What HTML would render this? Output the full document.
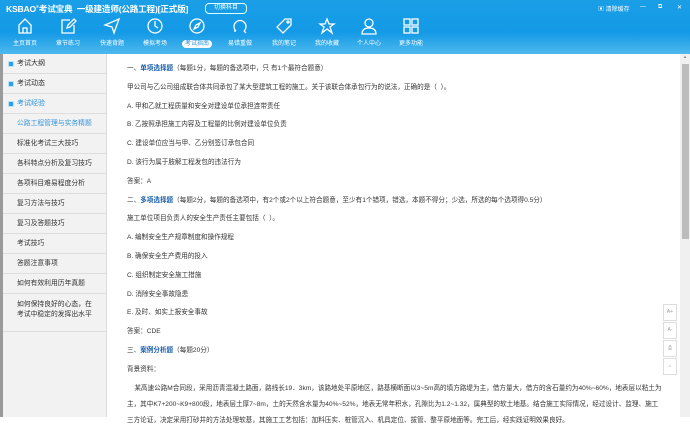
<html><head><style>
*{margin:0;padding:0;box-sizing:border-box}
body{width:690px;height:417px;overflow:hidden;font-family:"Liberation Sans","Noto Sans CJK SC",sans-serif;background:#fff;position:relative}
.hd{position:absolute;left:0;top:0;width:690px;height:54px;background:linear-gradient(#1a9ee6,#139ae6 60%,#4fb8ee);}
.hd .ttl{position:absolute;left:6px;top:3px;color:#fff;font-weight:bold;font-size:8.6px;white-space:nowrap;letter-spacing:-0.2px}
.sw{position:absolute;left:205px;top:3px;width:42px;height:11px;border:1px solid #dff;border-radius:4px;color:#fff;font-size:6px;text-align:center;line-height:9px}
.nav{position:absolute;top:17px;width:40px;text-align:center;color:#fff;font-size:6px}
.nav svg{display:block;margin:0 auto;width:18px;height:18px}
.nav span{display:inline-block;margin-top:5px;padding:0 3px;line-height:8px;border-radius:4px}
.act span{background:#fff;color:#1b8fd8}
.tr{position:absolute;top:4px;color:#fff;font-size:6px}
.sb{position:absolute;left:0;top:54px;width:107px;height:363px;background:#f2f2f2;border-left:3px solid #9a9a9a;border-right:1px solid #ddd}
.it{height:20px;border-bottom:1px solid #ddd;font-size:7px;line-height:20px;color:#333;padding-left:14px;position:relative}
.it i{position:absolute;left:5px;top:7px;width:6px;height:6px;background:#2aa0e8;border:1px solid #bfe3f8}
.sub{padding-left:14px;font-size:6.8px}
.ct{position:absolute;left:127px;top:63px;width:550px;font-size:6.6px;color:#333}
.ct p{height:18.8px;line-height:12px;white-space:nowrap}
.b{color:#1a5fa8;font-weight:bold}
.scr{position:absolute;left:680px;top:54px;width:10px;height:363px;background:#f0f0f0}
.th{position:absolute;left:682px;top:64px;width:7px;height:175px;background:#bcbcbc}
.tb{position:absolute;left:663px;width:14px;height:17px;border:1px solid #ddd;background:#fff;color:#999;font-size:5px;text-align:center;line-height:15px}
</style></head><body>
<div class="hd">
<div class="ttl">KSBAO<sup style="font-size:4px">®</sup>考试宝典 &nbsp;一级建造师(公路工程)[正式版]</div>
<div class="sw">切换科目</div>
<div class="tr" style="left:598px">▣ 清除缓存</div>
<div class="tr" style="left:640px">—</div>
<div class="tr" style="left:658px">⧉</div>
<div class="tr" style="left:677px">✕</div>
<div class="nav" style="left:5px"><svg viewBox="0 0 18 18" fill="none" stroke="#fff" stroke-width="1.3"><path d="M3 8L9 2l6 6v8H3z M7 16v-5h4v5"/></svg><span>主页首页</span></div>
<div class="nav" style="left:48px"><svg viewBox="0 0 18 18" fill="none" stroke="#fff" stroke-width="1.3"><path d="M11 3H3v13h12V8 M8 11l1-3 6-6 2 2-6 6z"/></svg><span>章节练习</span></div>
<div class="nav" style="left:92px"><svg viewBox="0 0 18 18" fill="none" stroke="#fff" stroke-width="1.3"><path d="M2 8l14-6-5 14-2-6z"/></svg><span>快速背题</span></div>
<div class="nav" style="left:135px"><svg viewBox="0 0 18 18" fill="none" stroke="#fff" stroke-width="1.3"><circle cx="9" cy="9" r="7"/><path d="M9 4v5l3 2"/></svg><span>模拟考场</span></div>
<div class="nav act" style="left:177px"><svg viewBox="0 0 18 18" fill="none" stroke="#fff" stroke-width="1.3"><circle cx="9" cy="9" r="7"/><path d="M12 6l-2 4-4 2 2-4z"/></svg><span>考试指南</span></div>
<div class="nav" style="left:220px"><svg viewBox="0 0 18 18" fill="none" stroke="#fff" stroke-width="1.3"><path d="M5 14A6 6 0 1 1 13 14 M5 14l-2 0 M13 14l2 2"/></svg><span>易错重做</span></div>
<div class="nav" style="left:264px"><svg viewBox="0 0 18 18" fill="none" stroke="#fff" stroke-width="1.3"><path d="M10 2h6v6l-8 8-6-6z"/><circle cx="13" cy="5" r="1"/></svg><span>我的笔记</span></div>
<div class="nav" style="left:307px"><svg viewBox="0 0 18 18" fill="none" stroke="#fff" stroke-width="1.3"><path d="M9 2l2 5h5l-4 3 2 6-5-4-5 4 2-6-4-3h5z"/></svg><span>我的收藏</span></div>
<div class="nav" style="left:349px"><svg viewBox="0 0 18 18" fill="none" stroke="#fff" stroke-width="1.3"><circle cx="9" cy="6" r="4"/><path d="M2 17c0-5 4-6 7-6s7 1 7 6z"/></svg><span>个人中心</span></div>
<div class="nav" style="left:391px"><svg viewBox="0 0 18 18" fill="none" stroke="#fff" stroke-width="1.3"><rect x="2" y="2" width="6" height="6"/><rect x="10" y="2" width="6" height="6"/><rect x="2" y="10" width="6" height="6"/><rect x="10" y="10" width="6" height="6"/></svg><span>更多功能</span></div>
</div>
<div class="sb">
<div class="it"><i></i>考试大纲</div>
<div class="it"><i></i>考试动态</div>
<div class="it" style="color:#2a8fd8"><i></i>考试经验</div>
<div class="it sub" style="color:#3a95dc">公路工程管理与实务精题</div>
<div class="it sub">标准化考试三大技巧</div>
<div class="it sub">各科特点分析及复习技巧</div>
<div class="it sub">各项科目难易程度分析</div>
<div class="it sub">复习方法与技巧</div>
<div class="it sub">复习及答题技巧</div>
<div class="it sub">考试技巧</div>
<div class="it sub">答题注意事项</div>
<div class="it sub">如何有效利用历年真题</div>
<div class="it sub" style="height:38px;line-height:10px;padding-top:6px">如何保持良好的心态，在<br>考试中稳定的发挥出水平</div>
</div>
<div class="ct">
<p>一、<span class="b">单项选择题</span>（每题1分，每题的备选项中，只 有1个最符合题意）</p>
<p>甲公司与乙公司组成联合体共同承包了某大型建筑工程的施工。关于该联合体承包行为的说法，正确的是（ &nbsp;）。</p>
<p>A. 甲和乙就工程质量和安全对建设单位承担连带责任</p>
<p>B. 乙按照承担施工内容及工程量的比例对建设单位负责</p>
<p>C. 建设单位应当与甲、乙分别签订承包合同</p>
<p>D. 该行为属于肢解工程发包的违法行为</p>
<p>答案：A</p>
<p>二、<span class="b">多项选择题</span>（每题2分，每题的备选项中，有2个或2个以上符合题意，至少有1个错项，错选，本题不得分；少选，所选的每个选项得0.5分）</p>
<p>施工单位项目负责人的安全生产责任主要包括（ &nbsp;）。</p>
<p>A. 编制安全生产规章制度和操作规程</p>
<p>B. 确保安全生产费用的投入</p>
<p>C. 组织制定安全施工措施</p>
<p>D. 消除安全事故隐患</p>
<p>E. 及时、如实上报安全事故</p>
<p>答案：CDE</p>
<p>三、<span class="b">案例分析题</span>（每题20分）</p>
<p>背景资料：</p>
<p style="height:16px">&nbsp;&nbsp;&nbsp;&nbsp;某高速公路M合同段，采用沥青混凝土路面，路线长19．3km，该路地处平原地区，路基横断面以3~5m高的填方路堤为主，借方量大，借方的含石量约为40%~60%，地表层以粘土为</p>
<p style="height:16px">主，其中K7+200~K9+800段，地表层土厚7~8m，土的天然含水量为40%~52%，地表无常年积水，孔隙比为1.2~1.32，属典型的软土地基。结合施工实际情况，经过设计、监理、施工</p>
<p>三方论证，决定采用打砂井的方法处理软基，其施工工艺包括：加料压实、桩管沉入、机具定位、拔管、整平原地面等。完工后，经实践证明效果良好。</p>
</div>
<div class="scr"><div style="font-size:5px;color:#888;text-align:center">▴</div></div>
<div class="th"></div>
<div class="tb" style="top:304px">A+</div>
<div class="tb" style="top:322px">A-</div>
<div class="tb" style="top:340px">⎙</div>
<div class="tb" style="top:358px">⌂</div>
</body></html>
